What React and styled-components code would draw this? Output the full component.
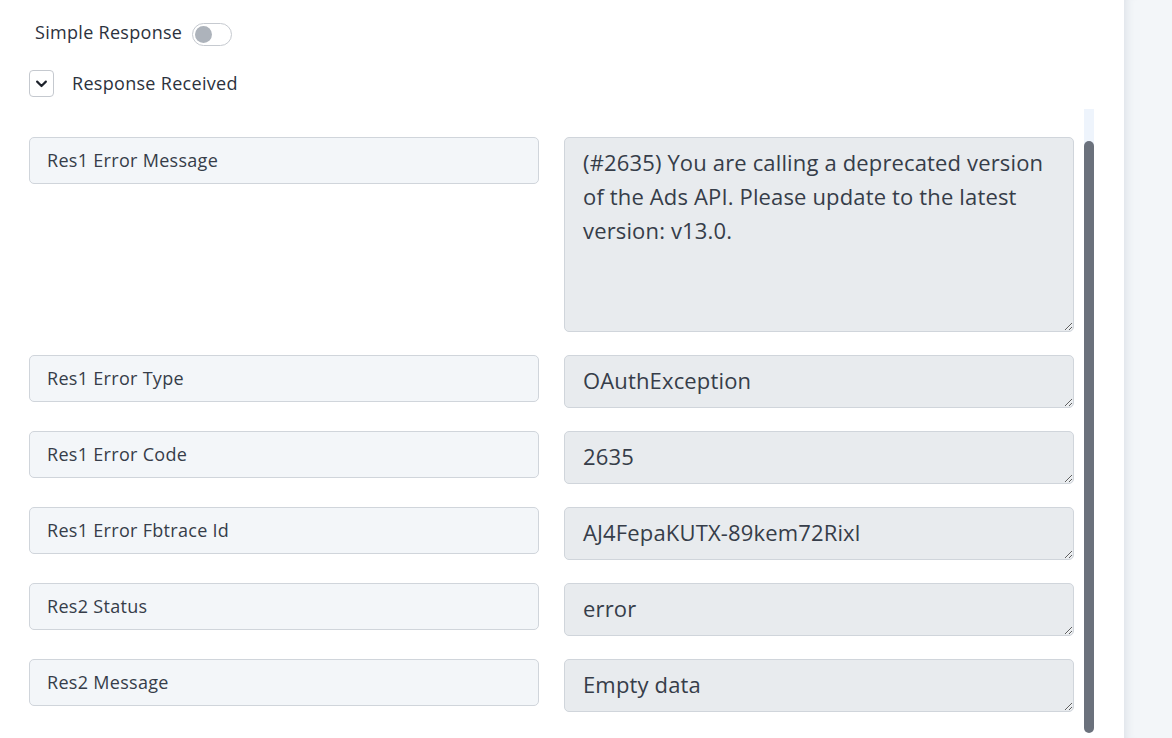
import React from "react";
import styled, { createGlobalStyle } from "styled-components";

const FONT = `"Open Sans", "Noto Sans", "Liberation Sans", sans-serif`;

const GlobalStyle = createGlobalStyle`
  html, body {
    margin: 0;
    padding: 0;
    background: #ffffff;
    overflow: hidden;
  }
  body {
    font-family: ${FONT};
    color: #343b47;
  }
  * { box-sizing: border-box; }
`;

const Page = styled.div`
  display: flex;
  width: 100vw;
  height: 100vh;
`;

const Main = styled.div`
  flex: 1;
  display: flex;
  flex-direction: column;
  min-width: 0;
  background: #ffffff;
`;

const Side = styled.aside`
  width: 48px;
  background: #f3f6f9;
  box-shadow: inset 10px 0 10px -8px rgba(60, 75, 95, 0.12);
`;

const ToggleRow = styled.div`
  display: flex;
  align-items: flex-start;
  gap: 10px;
  padding: 20px 0 0 35px;
  height: 46px;
`;

const ToggleLabel = styled.span`
  font-size: 18px;
  line-height: 24px;
  letter-spacing: 0.3px;
  color: #2c323d;
`;

const Switch = styled.span`
  display: inline-flex;
  align-items: center;
  width: 40px;
  height: 23px;
  margin-top: 3px;
  padding: 0 2px;
  border: 1px solid #c6cad0;
  border-radius: 12px;
  background: #ffffff;
`;

const Knob = styled.span`
  width: 17px;
  height: 17px;
  border-radius: 50%;
  background: #adb3bb;
`;

const SectionRow = styled.div`
  display: flex;
  align-items: center;
  gap: 18px;
  padding: 0 0 0 29px;
  margin-top: 24px;
  height: 27px;
`;

const ChevronBox = styled.button`
  display: flex;
  align-items: center;
  justify-content: center;
  width: 25px;
  height: 27px;
  padding: 0;
  border: 1px solid #c5c9cf;
  border-radius: 4px;
  background: #ffffff;
`;

const SectionTitle = styled.span`
  font-size: 18px;
  line-height: 24px;
  letter-spacing: 0.3px;
  color: #2c323d;
  margin-top: -1px;
`;

const Body = styled.div`
  flex: 1;
  display: flex;
  margin-top: 12px;
  min-height: 0;
`;

const Fields = styled.div`
  display: grid;
  grid-template-columns: 510px 510px;
  column-gap: 25px;
  row-gap: 23px;
  align-content: start;
  align-items: start;
  padding: 28px 0 0 29px;
`;

const LabelField = styled.input`
  width: 100%;
  height: 47px;
  padding: 0 17px 2px;
  border: 1px solid #d0d5db;
  border-radius: 5px;
  background: #f3f6f9;
  font-family: ${FONT};
  font-size: 18px;
  letter-spacing: 0.3px;
  color: #363d49;
  outline: none;
`;

const ValueField = styled.textarea`
  display: block;
  width: 100%;
  height: ${(p) => p.$h}px;
  padding: 7px 18px;
  border: 1px solid #d0d5db;
  border-radius: 5px;
  background: #e8ebee;
  font-family: ${FONT};
  font-size: 22px;
  line-height: 34px;
  letter-spacing: 0.15px;
  color: #363d49;
  resize: vertical;
  overflow: hidden;
  outline: none;
`;

const ScrollTrack = styled.div`
  display: flex;
  flex-direction: column;
  width: 10px;
  margin-left: 10px;
  padding-top: 32px;
  background: linear-gradient(#eef4fc 0 40px, transparent 40px);
`;

const ScrollThumb = styled.div`
  height: 592px;
  border-radius: 5px;
  background: #6b717c;
`;

const rows = [
  {
    label: "Res1 Error Message",
    value:
      "(#2635) You are calling a deprecated version of the Ads API. Please update to the latest version: v13.0.",
    h: 195,
  },
  { label: "Res1 Error Type", value: "OAuthException", h: 53 },
  { label: "Res1 Error Code", value: "2635", h: 53 },
  { label: "Res1 Error Fbtrace Id", value: "AJ4FepaKUTX-89kem72Rixl", h: 53 },
  { label: "Res2 Status", value: "error", h: 53 },
  { label: "Res2 Message", value: "Empty data", h: 53 },
];

export default function App() {
  return (
    <>
      <GlobalStyle />
      <Page>
        <Main>
          <ToggleRow>
            <ToggleLabel>Simple Response</ToggleLabel>
            <Switch>
              <Knob />
            </Switch>
          </ToggleRow>
          <SectionRow>
            <ChevronBox aria-label="collapse">
              <svg width="15" height="15" viewBox="0 0 24 24" fill="none">
                <path
                  d="M5 9l7 7 7-7"
                  stroke="#1d222b"
                  strokeWidth="3.4"
                  strokeLinecap="round"
                  strokeLinejoin="round"
                />
              </svg>
            </ChevronBox>
            <SectionTitle>Response Received</SectionTitle>
          </SectionRow>
          <Body>
            <Fields>
              {rows.map((r) => (
                <React.Fragment key={r.label}>
                  <LabelField readOnly value={r.label} />
                  <ValueField readOnly $h={r.h} value={r.value} />
                </React.Fragment>
              ))}
            </Fields>
            <ScrollTrack>
              <ScrollThumb />
            </ScrollTrack>
          </Body>
        </Main>
        <Side />
      </Page>
    </>
  );
}
